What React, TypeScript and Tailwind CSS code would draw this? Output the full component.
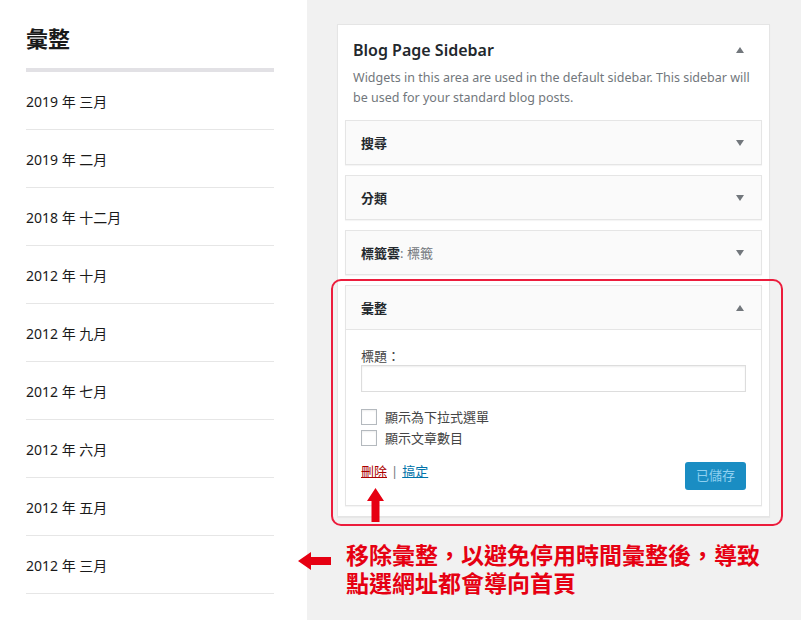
import React from 'react'

const archives = [
  '2019 年 三月',
  '2019 年 二月',
  '2018 年 十二月',
  '2012 年 十月',
  '2012 年 九月',
  '2012 年 七月',
  '2012 年 六月',
  '2012 年 五月',
  '2012 年 三月',
]

const cjk = { fontFamily: '"Noto Sans", "Noto Sans CJK TC", sans-serif' }

function Caret({ up }: { up?: boolean }) {
  return (
    <svg width="8" height="6" viewBox="0 0 8 6" className="shrink-0">
      {up ? <polygon points="0,6 4,0 8,6" fill="#72777c" /> : <polygon points="0,0 8,0 4,6" fill="#72777c" />}
    </svg>
  )
}

function WidgetBar({ children, up }: { children: React.ReactNode; up?: boolean }) {
  return (
    <div className="flex h-[43px] items-center justify-between pl-[15px] pr-[17px]">
      <div className="text-[13px] font-bold leading-[18px] text-[#23282d]">{children}</div>
      <Caret up={up} />
    </div>
  )
}

function Checkbox({ label }: { label: string }) {
  return (
    <div className="flex h-[16px] items-center gap-[8px]">
      <div className="h-[16px] w-[16px] border border-[#b4b9be] bg-white shadow-[inset_0_1px_2px_rgba(0,0,0,0.07)]" />
      <span className="text-[13px] leading-[16px] text-[#444]">{label}</span>
    </div>
  )
}

export default function App() {
  return (
    <div className="relative flex h-[620px] w-[801px] overflow-hidden" style={cjk}>
      {/* archive list */}
      <div className="w-[307px] shrink-0 bg-white pl-[26px]">
        <div className="w-[248px]">
          <h2 className="pt-[23px] text-[22px] font-bold leading-[30px] text-[#1a1a1a]">彙整</h2>
          <div className="mt-[15px] h-[4px] bg-[#e2e1e5]" />
          {archives.map((a, i) => (
            <div key={i} className="border-b border-[#e6e6e6] pb-[17px] pt-[20px] text-[14px] leading-[20px] text-[#1a1a1a]">
              {a}
            </div>
          ))}
        </div>
      </div>

      {/* widget area */}
      <div className="flex-1 bg-[#f1f1f1] pl-[30px] pt-[24px]">
        <div className="w-[433px] border border-[#e5e5e5] bg-white px-[7px] pb-[10px] shadow-[0_1px_1px_rgba(0,0,0,0.04)]">
          <div className="flex items-center justify-between pl-[8px] pr-[18px] pt-[13px]">
            <div className="text-[16px] font-semibold leading-[24px] text-[#23282d]">Blog Page Sidebar</div>
            <Caret up />
          </div>
          <p className="mb-[12px] mt-[6px] px-[8px] text-[12.5px] leading-[20px] text-[#72777c]">
            Widgets in this area are used in the default sidebar. This sidebar will be used for your standard blog posts.
          </p>
          <div className="flex flex-col gap-[10px]">
            <div className="border border-[#e5e5e5] bg-[#fafafa] shadow-[0_1px_1px_rgba(0,0,0,0.04)]">
              <WidgetBar>搜尋</WidgetBar>
            </div>
            <div className="border border-[#e5e5e5] bg-[#fafafa] shadow-[0_1px_1px_rgba(0,0,0,0.04)]">
              <WidgetBar>分類</WidgetBar>
            </div>
            <div className="border border-[#e5e5e5] bg-[#fafafa] shadow-[0_1px_1px_rgba(0,0,0,0.04)]">
              <WidgetBar>
                標籤雲<span className="font-normal text-[#72777c]">: 標籤</span>
              </WidgetBar>
            </div>
            <div className="border border-[#e5e5e5] bg-white shadow-[0_1px_1px_rgba(0,0,0,0.04)]">
              <div className="border-b border-[#e5e5e5] bg-[#fafafa]">
                <WidgetBar up>彙整</WidgetBar>
              </div>
              <div className="px-[15px] pb-[15px] pt-[17px]">
                <div className="text-[13px] leading-[18px] text-[#444]">標題：</div>
                <div className="h-[27px] w-full border border-[#dddddd] bg-white shadow-[inset_0_1px_2px_rgba(0,0,0,0.07)]" />
                <div className="mt-[17px] flex flex-col gap-[5px]">
                  <Checkbox label="顯示為下拉式選單" />
                  <Checkbox label="顯示文章數目" />
                </div>
                <div className="mt-[16px] flex items-start justify-between">
                  <div className="text-[13px] leading-[18px]">
                    <span className="text-[#a00] underline">刪除</span>
                    <span className="mx-[4px] text-[#72777c]">|</span>
                    <span className="text-[#0073aa] underline">搞定</span>
                  </div>
                  <div className="flex h-[28px] w-[61px] items-center justify-center rounded-[3px] bg-[#1a8dc3] text-[13px] text-[#8fd0f0]">
                    已儲存
                  </div>
                </div>
              </div>
            </div>
          </div>
        </div>
        <div className="ml-[9px] mt-[24px] text-[23px] font-bold leading-[28px] text-[#e60012]">
          移除彙整，以避免停用時間彙整後，導致
          <br />
          點選網址都會導向首頁
        </div>
      </div>

      {/* annotations */}
      <div className="absolute left-[331px] top-[279px] h-[247px] w-[452px] rounded-[10px] border-2 border-[#ec1c3c]" />
      <svg className="absolute left-[367px] top-[488px]" width="17" height="34" viewBox="0 0 17 34">
        <polygon points="8.5,0 17,13 12.5,13 12.5,34 4.5,34 4.5,13 0,13" fill="#e60012" />
      </svg>
      <svg className="absolute left-[298px] top-[551px]" width="33" height="20" viewBox="0 0 33 20">
        <polygon points="0,10 13,1 13,6 33,6 33,14 13,14 13,19" fill="#e60012" />
      </svg>
    </div>
  )
}
